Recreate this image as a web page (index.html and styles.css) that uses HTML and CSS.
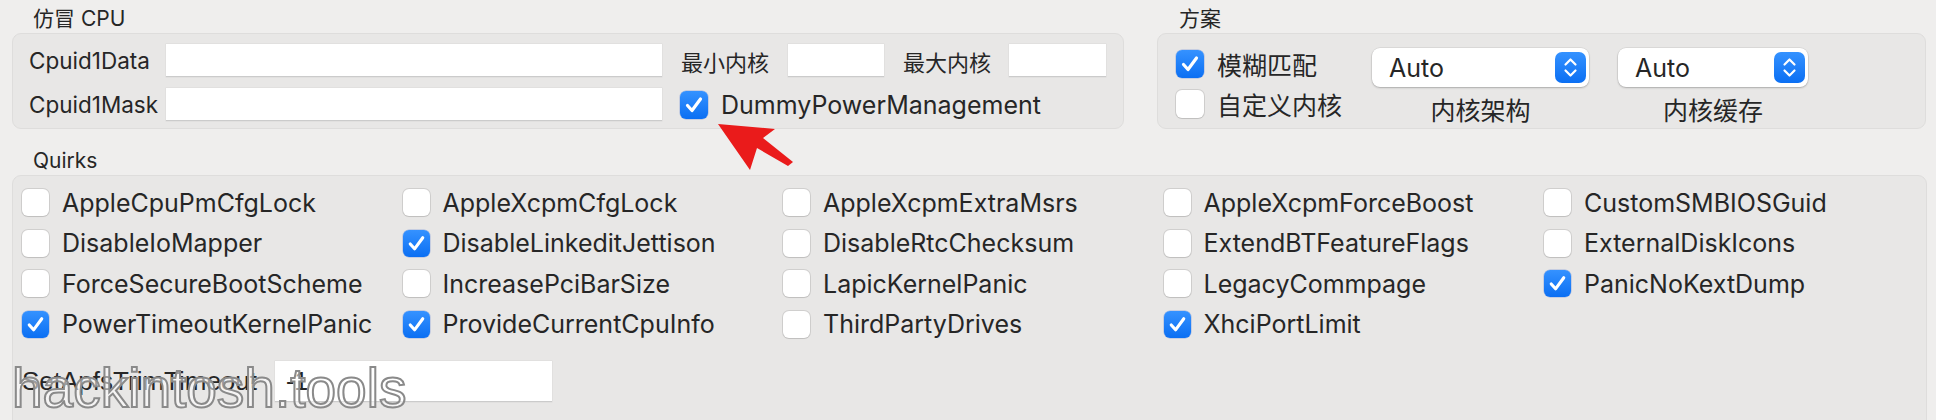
FILE: index.html
```html
<!DOCTYPE html>
<html lang="zh">
<head>
<meta charset="utf-8">
<title>Kernel Emulate</title>
<link rel="stylesheet" href="styles.css">
</head>
<body>
<div class="page">
  <div class="top">
    <section class="group cpu">
      <div class="group-title">仿冒 CPU</div>
      <div class="box cpu-box">
        <div class="row">
          <span class="lbl-en cpuid-lbl">Cpuid1Data</span>
          <span class="input in-wide"></span>
          <span class="lbl-cn">最小内核</span>
          <span class="input in-num"></span>
          <span class="lbl-cn">最大内核</span>
          <span class="input in-num2"></span>
        </div>
        <div class="row">
          <span class="lbl-en cpuid-lbl">Cpuid1Mask</span>
          <span class="input in-wide in-wide2"></span>
          <span class="check-item big"><span class="cb cb28 on"><svg viewBox="0 0 28 28"><path d="M7.5 14.5 L12 19.5 L20.5 8" /></svg></span>DummyPowerManagement</span>
        </div>
      </div>
    </section>
    <section class="group plan">
      <div class="group-title plan-title">方案</div>
      <div class="box plan-box">
        <div class="plan-checks">
          <span class="check-item big"><span class="cb cb28 on"><svg viewBox="0 0 28 28"><path d="M7.5 14.5 L12 19.5 L20.5 8" /></svg></span>模糊匹配</span>
          <span class="check-item big"><span class="cb cb28"></span>自定义内核</span>
        </div>
        <div class="popcol pop1">
          <div class="popup"><span class="pop-text">Auto</span><span class="stepper"><svg viewBox="0 0 31 31"><path d="M10.5 12.5 L15.5 7.5 L20.5 12.5 M10.5 18.5 L15.5 23.5 L20.5 18.5" /></svg></span></div>
          <div class="pop-label">内核架构</div>
        </div>
        <div class="popcol pop2">
          <div class="popup"><span class="pop-text">Auto</span><span class="stepper"><svg viewBox="0 0 31 31"><path d="M10.5 12.5 L15.5 7.5 L20.5 12.5 M10.5 18.5 L15.5 23.5 L20.5 18.5" /></svg></span></div>
          <div class="pop-label">内核缓存</div>
        </div>
      </div>
    </section>
  </div>

  <section class="group quirks">
    <div class="group-title">Quirks</div>
    <div class="box quirks-box">
      <div class="qgrid">
        <span class="check-item q"><span class="cb"></span>AppleCpuPmCfgLock</span>
        <span class="check-item q"><span class="cb"></span>AppleXcpmCfgLock</span>
        <span class="check-item q"><span class="cb"></span>AppleXcpmExtraMsrs</span>
        <span class="check-item q"><span class="cb"></span>AppleXcpmForceBoost</span>
        <span class="check-item q"><span class="cb"></span>CustomSMBIOSGuid</span>

        <span class="check-item q"><span class="cb"></span>DisableIoMapper</span>
        <span class="check-item q"><span class="cb on"><svg viewBox="0 0 28 28"><path d="M7.5 14.5 L12 19.5 L20.5 8" /></svg></span>DisableLinkeditJettison</span>
        <span class="check-item q"><span class="cb"></span>DisableRtcChecksum</span>
        <span class="check-item q"><span class="cb"></span>ExtendBTFeatureFlags</span>
        <span class="check-item q"><span class="cb"></span>ExternalDiskIcons</span>

        <span class="check-item q"><span class="cb"></span>ForceSecureBootScheme</span>
        <span class="check-item q"><span class="cb"></span>IncreasePciBarSize</span>
        <span class="check-item q"><span class="cb"></span>LapicKernelPanic</span>
        <span class="check-item q"><span class="cb"></span>LegacyCommpage</span>
        <span class="check-item q"><span class="cb on"><svg viewBox="0 0 28 28"><path d="M7.5 14.5 L12 19.5 L20.5 8" /></svg></span>PanicNoKextDump</span>

        <span class="check-item q"><span class="cb on"><svg viewBox="0 0 28 28"><path d="M7.5 14.5 L12 19.5 L20.5 8" /></svg></span>PowerTimeoutKernelPanic</span>
        <span class="check-item q"><span class="cb on"><svg viewBox="0 0 28 28"><path d="M7.5 14.5 L12 19.5 L20.5 8" /></svg></span>ProvideCurrentCpuInfo</span>
        <span class="check-item q"><span class="cb"></span>ThirdPartyDrives</span>
        <span class="check-item q"><span class="cb on"><svg viewBox="0 0 28 28"><path d="M7.5 14.5 L12 19.5 L20.5 8" /></svg></span>XhciPortLimit</span>
      </div>
      <div class="apfs">
        <span class="apfs-lbl">SetApfsTrimTimeout</span>
        <span class="input apfs-input">-1</span>
      </div>
    </div>
  </section>

  <svg class="arrow" viewBox="0 0 110 70" width="110" height="70">
    <polygon points="18,14 75,19 63,28 93,52 88,56 57,38 50,60" />
  </svg>

  <div class="watermark">hackintosh.tools</div>
</div>
</body>
</html>
```

FILE: styles.css
```css
* { box-sizing: border-box; }
html, body { margin: 0; padding: 0; }
body {
  width: 1936px;
  height: 420px;
  overflow: hidden;
  background: #efeeed;
  font-family: Inter, "Noto Sans CJK SC", sans-serif;
  color: #262626;
}
.page {
  position: relative;
  height: 420px;
  padding: 7px 0 0 12px;
}
.top { display: flex; gap: 33px; }

.group-title {
  font-size: 21px;
  line-height: 24px;
  height: 24px;
  padding-left: 21px;
  margin-bottom: 2px;
}
.plan-title { padding-left: 22px; }

.box {
  background: #e8e7e6;
  border: 1px solid #dedddc;
  border-radius: 9px;
}

/* CPU group */
.cpu-box {
  width: 1112px;
  height: 96px;
  padding: 10px 0 0 16px;
  display: flex;
  flex-direction: column;
  gap: 11px;
}
.row { display: flex; align-items: center; height: 33px; }
.lbl-en { font-size: 22.5px; white-space: nowrap; }
.lbl-cn { font-size: 22px; white-space: nowrap; }
.cpuid-lbl { width: 137px; }
.input {
  display: block;
  background: #fff;
  height: 33px;
  border-bottom: 1px solid #cbcbcb;
  box-shadow: 0 0 0 0.5px rgba(0,0,0,0.06);
}
.in-wide { width: 496px; margin-right: 19px; }
.in-wide2 { margin-right: 18px; }
.in-num { width: 96px; margin: 0 19px 0 19px; }
.in-num2 { width: 97px; margin-left: 18px; }

/* checkboxes */
.check-item {
  display: flex;
  align-items: center;
  gap: 13px;
  white-space: nowrap;
}
.big { font-size: 25px; height: 28px; }
.cb {
  flex: none;
  width: 27px;
  height: 27px;
  border-radius: 6px;
  background: #fff;
  box-shadow: 0 0 0 1px rgba(0,0,0,0.1), 0 1px 1px rgba(0,0,0,0.08);
  display: flex;
}
.cb28 { width: 28px; height: 28px; }
.cb.on {
  background: linear-gradient(#3592ff, #0b6ff3);
  box-shadow: 0 0 0 0.5px rgba(0,60,200,0.3);
}
.cb svg { width: 100%; height: 100%; }
.cb path {
  fill: none;
  stroke: #fff;
  stroke-width: 3.2;
  stroke-linecap: round;
  stroke-linejoin: round;
}

/* plan group */
.plan-box {
  width: 769px;
  height: 96px;
  display: flex;
  padding-left: 18px;
}
.plan-checks {
  width: 196px;
  padding-top: 16px;
  display: flex;
  flex-direction: column;
  gap: 12px;
}
.popcol {
  display: flex;
  flex-direction: column;
  align-items: center;
  padding-top: 14px;
}
.pop1 { width: 217px; margin-right: 29px; }
.pop2 { width: 190px; }
.popup {
  width: 100%;
  height: 39px;
  background: #fff;
  border-radius: 8px;
  box-shadow: 0 0 0 0.5px rgba(0,0,0,0.1), 0 1px 2px rgba(0,0,0,0.22);
  display: flex;
  align-items: center;
  justify-content: space-between;
  padding: 0 3.5px 0 17px;
}
.pop-text { font-size: 25px; }
.stepper {
  width: 31px;
  height: 31px;
  border-radius: 7px;
  background: linear-gradient(#3592ff, #0b6ff3);
  display: flex;
}
.stepper svg { width: 100%; height: 100%; }
.stepper path {
  fill: none;
  stroke: #fff;
  stroke-width: 2.2;
  stroke-linecap: round;
  stroke-linejoin: round;
}
.pop-label {
  font-size: 25px;
  line-height: 30px;
  margin-top: 9px;
}

/* quirks */
.quirks { margin-top: 20px; }
.quirks-box {
  width: 1915px;
  height: 262px;
  padding: 13px 0 0 9px;
}
.qgrid {
  display: grid;
  grid-template-columns: repeat(5, 380.5px);
  grid-auto-rows: 27px;
  row-gap: 13.5px;
}
.q { font-size: 25px; height: 27px; }
.apfs {
  display: flex;
  align-items: center;
  margin-top: 23.5px;
}
.apfs-lbl {
  width: 253px;
  font-size: 26px;
  font-family: "Liberation Sans", "Noto Sans CJK SC", sans-serif;
  white-space: nowrap;
}
.apfs-input {
  width: 277px;
  height: 41px;
  font-family: "Liberation Sans", sans-serif;
  font-size: 25px;
  line-height: 41px;
  padding-left: 11px;
}

/* overlays */
.arrow {
  position: absolute;
  left: 700px;
  top: 110px;
}
.arrow polygon { fill: #ea1b1b; }

.watermark {
  position: absolute;
  left: 12px;
  top: 361px;
  font-family: "Liberation Sans", sans-serif;
  font-size: 55px;
  line-height: 55px;
  color: rgba(255,255,255,0.55);
  -webkit-text-stroke: 2px #8a8a8a;
  white-space: nowrap;
}
```
